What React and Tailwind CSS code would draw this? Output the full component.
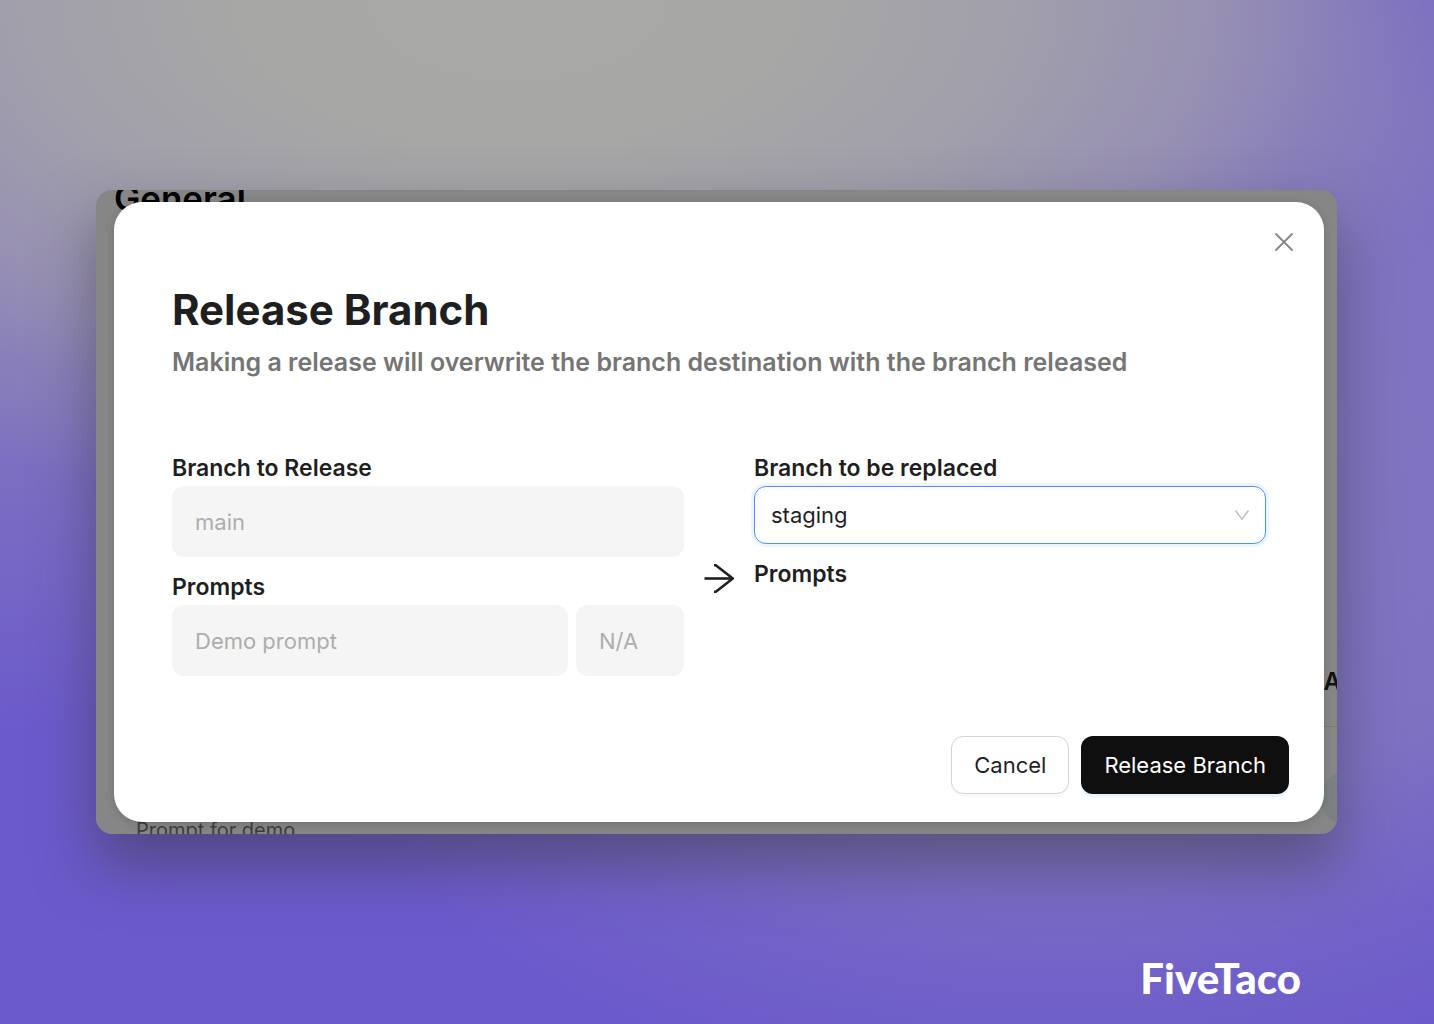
import { useState } from 'react';

const fieldClass =
  'h-[71px] min-w-0 rounded-xl bg-[#f5f5f5] px-[23px] text-[22px] text-[#adadad]';
const labelClass = 'text-[23px] leading-9 font-semibold text-[#1f1f1f]';

const CloseIcon = () => (
  <svg viewBox="0 0 20 20" className="size-5" fill="none" stroke="#858585" strokeWidth="1.8" strokeLinecap="round">
    <path d="M2 2l16 16M18 2L2 18" />
  </svg>
);

const ChevronIcon = () => (
  <svg
    viewBox="0 0 16 12"
    className="pointer-events-none absolute top-1/2 right-4 h-3 w-4 -translate-y-1/2"
    fill="none"
    stroke="#bfbfbf"
    strokeWidth="1.5"
  >
    <path d="M1.500 1.500L8 10.200l6.500-8.700" />
  </svg>
);

const ArrowIcon = () => (
  <svg viewBox="0 0 30 30" className="h-[30px] w-[30px]" fill="none" stroke="#1f1f1f" strokeWidth="2.600">
    <path d="M0.500 14.500h28" />
    <path d="M10 1.300h1.800L28.800 14.500 11.800 27.700H10" strokeLinejoin="round" />
  </svg>
);

// Page that stays visible around the edges of the dialog
const Backdrop = () => (
  <div className="absolute inset-0 overflow-hidden rounded-2xl bg-[#868686]" aria-hidden="true">
    <p className="absolute -top-3 left-[18px] text-[35px] leading-10 font-semibold text-black">General</p>
    <p className="absolute top-[474px] -right-1 text-2xl leading-9 font-semibold text-[#111111]">A</p>
    <div className="absolute top-[536px] right-0 h-px w-4 bg-[#7b7b7b]" />
    <div className="absolute top-[580px] -right-12 h-14 w-16 rounded-full bg-[#7b8082]" />
    <p className="absolute -bottom-3 left-10 text-[20px] leading-8 text-[#3d3d3d]">Prompt for demo</p>
  </div>
);

export default function App() {
  const [branch, setBranch] = useState('staging');

  return (
    <div className="flex min-h-screen flex-col bg-[#6b5acb] bg-[radial-gradient(ellipse_70%_52%_at_36%_0%,#a9a9a7_0%,#a7a7a6_28%,#a19fab_50%,#9790b3_70%,rgba(139,131,184,0.7)_84%,transparent_100%),radial-gradient(ellipse_62%_66%_at_74%_42%,#8579c0_0%,#7e71c2_60%,rgba(120,105,197,0.5)_82%,transparent_100%),radial-gradient(ellipse_40%_70%_at_0%_12%,#8f86b8_0%,#8276be_35%,transparent_85%)] pt-[190px] font-[Inter,sans-serif]">
      <main className="relative mr-[97px] ml-24 rounded-2xl pt-3 pr-[13px] pb-3 pl-[18px] shadow-[0_30px_60px_rgba(60,56,70,0.55)]">
        <Backdrop />

        <section
          role="dialog"
          aria-labelledby="release-title"
          className="relative rounded-[28px] bg-white pt-[82px] pb-[28px] shadow-[0_2px_10px_rgba(0,0,0,0.15)]"
        >
          <button type="button" aria-label="Close" className="absolute top-[30px] right-[30px]">
            <CloseIcon />
          </button>

          <header className="px-[58px]">
            <h1 id="release-title" className="text-[42px] leading-[52px] font-bold text-[#1f1f1f]">
              Release Branch
            </h1>
            <p className="text-[25px] leading-[52px] font-semibold text-[#757575]">
              Making a release will overwrite the branch destination with the branch released
            </p>
          </header>

          <div className="mt-[62px] flex items-center px-[58px]">
            <div className="flex min-w-0 flex-1 flex-col">
              <label htmlFor="source" className={labelClass}>Branch to Release</label>
              <input id="source" className={fieldClass} value="main" disabled />
              <label htmlFor="prompt" className={`mt-3 ${labelClass}`}>Prompts</label>
              <div className="flex gap-2">
                <input id="prompt" className={`flex-1 ${fieldClass}`} value="Demo prompt" disabled />
                <input aria-label="Version" className={`w-[108px] ${fieldClass}`} value="N/A" disabled />
              </div>
            </div>

            <div className="flex w-[70px] justify-center pt-8">
              <ArrowIcon />
            </div>

            <div className="flex min-w-0 flex-1 flex-col self-start">
              <label htmlFor="target" className={labelClass}>Branch to be replaced</label>
              <div className="relative">
                <select
                  id="target"
                  value={branch}
                  onChange={(e) => setBranch(e.target.value)}
                  className="block h-[58px] w-full appearance-none rounded-xl border border-[#4c93ff] bg-white px-4 text-[22px] text-[#1f1f1f] shadow-[0_0_0_3px_rgba(5,145,255,0.08)] outline-none"
                >
                  <option>staging</option>
                </select>
                <ChevronIcon />
              </div>
              <h2 className={`mt-3 ${labelClass}`}>Prompts</h2>
            </div>
          </div>

          <footer className="mt-[60px] flex justify-end gap-3 pr-[35px]">
            <button
              type="button"
              className="h-[58px] rounded-xl border border-[#d4d4d4] bg-white px-[22px] text-[22px] text-[#1f1f1f] shadow-[0_3px_0_rgba(0,0,0,0.02)]"
            >
              Cancel
            </button>
            <button
              type="button"
              className="h-[58px] rounded-xl bg-[#0f0f0f] px-[23px] text-[22px] text-white shadow-[0_3px_0_rgba(5,145,255,0.1)]"
            >
              Release Branch
            </button>
          </footer>
        </section>
      </main>

      <p className="mt-auto mr-[133px] mb-5 self-end font-[Lato,sans-serif] text-[42px] leading-[52px] font-black text-white">
        FiveTaco
      </p>
    </div>
  );
}
